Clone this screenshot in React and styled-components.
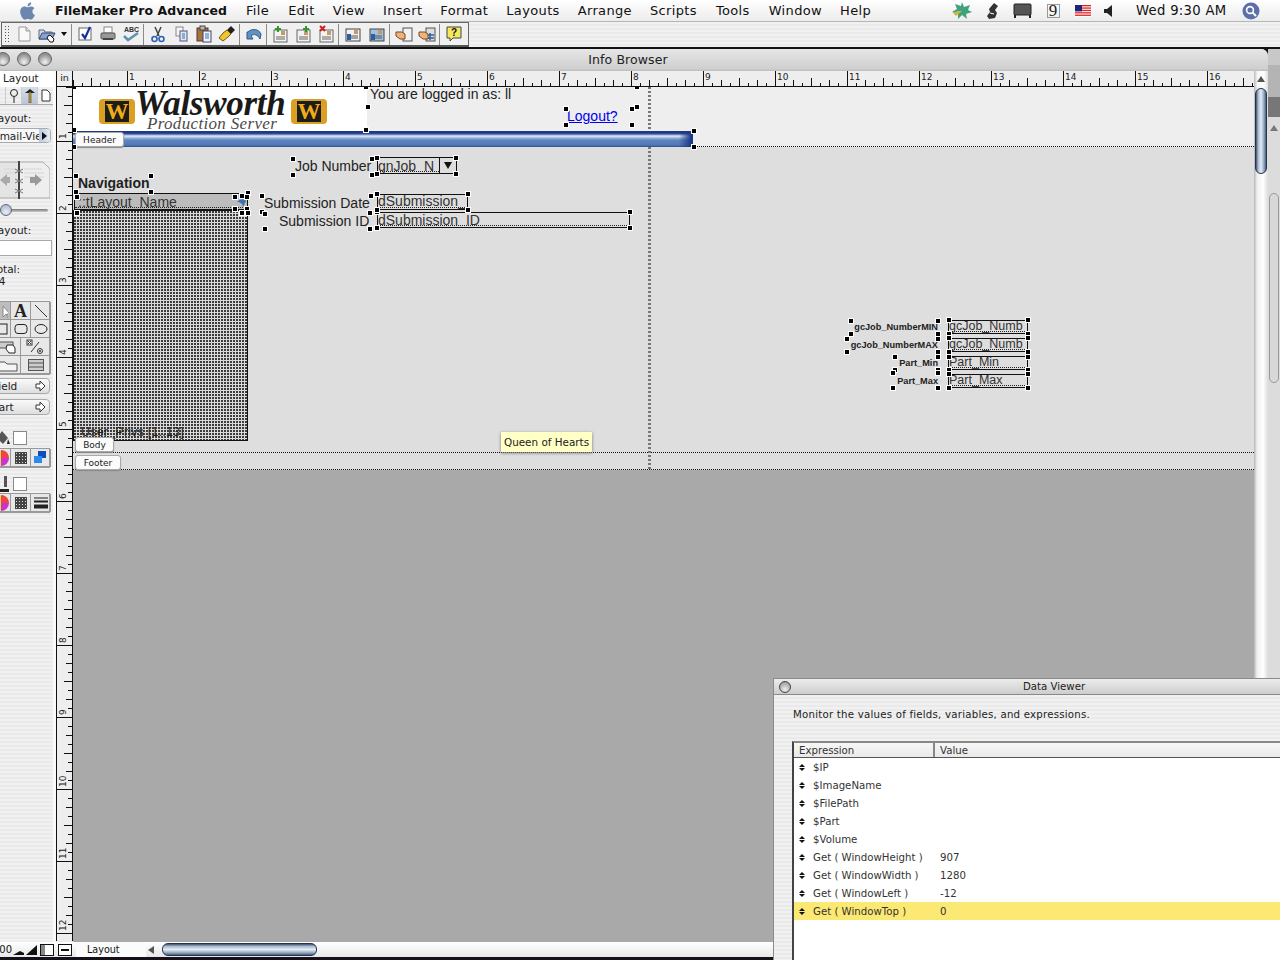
import React from 'react';
import styled, { createGlobalStyle } from 'styled-components';
import { FaApple } from 'react-icons/fa';

const UI = `"DejaVu Sans", "Liberation Sans", sans-serif`;
const SANS = `"Liberation Sans", Arial, sans-serif`;
const SERIF = `"Liberation Serif", "Times New Roman", serif`;
const STRIPES = `repeating-linear-gradient(180deg, #f1f1f1 0 2px, #eaeaea 2px 4px)`;

const GlobalStyle = createGlobalStyle`
  html, body { margin: 0; padding: 0; background: #15101a; }
  * { box-sizing: border-box; }
`;

const Screen = styled.div`
  position: relative;
  width: 1280px;
  height: 960px;
  overflow: hidden;
  display: flex;
  flex-direction: column;
  font-family: ${UI};
  color: #111;
  background: #15101a;
`;

/* menu bar */
const MenuBar = styled.div`
  height: 22px;
  flex: none;
  display: flex;
  align-items: center;
  background: linear-gradient(180deg, #fff 0%, #f6f6f6 45%, #ececec 100%);
  border-bottom: 1px solid #b5b5b5;
  font-size: 13px;
  padding-left: 18px;
`;
const AppleMark = styled(FaApple)`
  width: 19px;
  height: 20px;
  color: #6d86b1;
  margin-right: 18px;
`;
const AppName = styled.span`
  font-weight: 700;
  font-size: 12.45px;
  margin-right: 19px;
  letter-spacing: 0.1px;
  white-space: nowrap;
`;
const MenuItem = styled.span`
  margin-right: ${(p) => p.$gap}px;
  white-space: nowrap;
  font-size: 13px;
  letter-spacing: 0.35px;
`;
const MenuRight = styled.div`
  margin-left: auto;
  display: flex;
  align-items: center;
  height: 100%;
  padding-right: 20px;
`;
const Extra = styled.span`
  display: flex;
  align-items: center;
  justify-content: center;
  width: ${(p) => p.$w}px;
`;
const Clock = styled.span`
  font-size: 13.2px;
  letter-spacing: 0.3px;
  width: 106px;
  white-space: nowrap;
`;

/* toolbar */
const ToolRow = styled.div`
  height: 27px;
  flex: none;
  background: ${STRIPES};
  border-bottom: 2px solid #111;
`;
const Toolbar = styled.div`
  width: 468px;
  height: 25px;
  display: flex;
  align-items: center;
  margin-left: 1px;
  border: 1px solid #666;
  border-bottom-width: 2px;
  border-bottom-color: #555;
  background: #f0f0f0;
`;
const Grip = styled.span`
  width: 6px;
  height: 19px;
  margin: 0 2px 0 2px;
  background: radial-gradient(circle, #555 0.7px, transparent 0.9px) 0 0/3px 3px;
`;
const ToolButton = styled.span`
  width: 23px;
  height: 20px;
  display: flex;
  align-items: center;
  justify-content: center;
  margin-left: ${(p) => p.$ml || 0}px;
`;
const ToolArrow = styled.span`
  width: 12px;
  display: flex;
  justify-content: center;
  &::after {
    content: '';
    border: 3px solid transparent;
    border-top: 4px solid #111;
    border-bottom: 0;
  }
`;
const ToolSep = styled.span`
  width: 1px;
  height: 21px;
  margin: 0 ${(p) => 1 + (p.$extra || 0)}px 0 1px;
  background: #8b8b8b;
`;

/* document window */
const Desk = styled.div`
  flex: 1;
  min-height: 0;
  display: flex;
`;
const Win = styled.div`
  width: 1268px;
  height: 908px;
  display: flex;
  flex-direction: column;
  background: #eee;
  border-top-right-radius: 7px;
  overflow: hidden;
`;
const TitleBar = styled.div`
  position: relative;
  height: 22px;
  flex: none;
  display: flex;
  align-items: center;
  justify-content: center;
  padding: 0 12px 2px 0;
  background: linear-gradient(180deg, #e6e6e6, #cfcfcf 90%, #bbb);
  font-size: 12.5px;
  letter-spacing: 0.1px;
  color: #222;
`;
const Lights = styled.div`
  position: absolute;
  left: -4px;
  top: 3px;
  display: flex;
  gap: 7px;
`;
const Light = styled.span`
  width: 14px;
  height: 14px;
  border-radius: 50%;
  border: 1px solid #666;
  background: radial-gradient(circle at 50% 75%, #f4f4f4, #a4a4a4 55%, #777 100%);
`;
const WinBody = styled.div`
  flex: 1;
  min-height: 0;
  display: flex;
`;

/* status palette */
const Sidebar = styled.div`
  width: 56px;
  flex: none;
  overflow: hidden;
  background: ${STRIPES};
  border-right: 3px solid #fafafa;
  font-size: 10.5px;
  color: #222;
`;
const SideTitle = styled.div`
  height: 16px;
  line-height: 15px;
  padding-left: 3px;
  background: #fff;
  font-size: 10.5px;
`;
const SideInner = styled.div`
  margin-left: -12px;
  width: 65px;
  display: flex;
  flex-direction: column;
`;
const ModeRow = styled.div`
  height: 18px;
  display: flex;
  padding-left: 17px;
  border-bottom: 1px solid #aaa;
`;
const ModeCell = styled.span`
  width: 16px;
  display: flex;
  align-items: center;
  justify-content: center;
  border-left: 1px solid #ccc;
  background: ${(p) => (p.$on ? 'linear-gradient(180deg,#d5dde8,#b9c6d8)' : 'transparent')};
`;
const SideLabel = styled.div`
  margin-top: ${(p) => p.$top}px;
  padding-left: 4px;
  height: 12px;
  line-height: 12px;
  white-space: nowrap;
`;
const Popup = styled.div`
  margin-top: 4px;
  height: 15px;
  width: 63px;
  display: flex;
  align-items: center;
  padding-left: 4px;
  border: 1px solid #aaa;
  border-radius: 4px;
  background: #f8f8f8;
  overflow: hidden;
  white-space: nowrap;
  span {
    flex: 1;
    overflow: hidden;
  }
  i {
    width: 11px;
    height: 100%;
    flex: none;
    display: flex;
    align-items: center;
    justify-content: center;
    background: linear-gradient(90deg, #b7c8e0, #e5edf7);
  }
  i::after {
    content: '';
    border: 4px solid transparent;
    border-left: 5px solid #111;
    border-right: 0;
  }
`;
const Book = styled.svg`
  display: block;
  margin-top: 18px;
  width: 62px;
  height: 38px;
`;
const SliderTrack = styled.div`
  position: relative;
  margin: 10px 0 0 12px;
  width: 48px;
  height: 3px;
  background: linear-gradient(180deg, #777, #ccc);
  border-radius: 2px;
`;
const SliderKnob = styled.span`
  position: absolute;
  left: 0;
  top: -5px;
  width: 12px;
  height: 12px;
  border-radius: 50%;
  border: 1px solid #667;
  background: radial-gradient(circle at 50% 70%, #e7edf5, #9fb0c6);
`;
const SideInput = styled.div`
  margin-top: 4px;
  width: 64px;
  height: 16px;
  background: #fff;
  border: 1px solid #aaa;
`;
const ToolGrid = styled.div`
  margin: ${(p) => p.$top}px 0 0 2px;
  width: 60px;
  display: grid;
  grid-template-columns: repeat(6, 10px);
  grid-auto-rows: 18px;
  border: 1px solid #999;
  background: #e8e8e8;
`;
const ToolCell = styled.span`
  grid-column: span ${(p) => p.$span};
  display: flex;
  align-items: center;
  justify-content: center;
  overflow: hidden;
  border-right: 1px solid #999;
  border-bottom: 1px solid #999;
  background: ${(p) => (p.$on ? '#bdbdbd' : 'transparent')};
`;
const LetterA = styled.span`
  font-family: ${SERIF};
  font-weight: 700;
  font-size: 18px;
  line-height: 18px;
  color: #222;
`;
const PartButton = styled.div`
  margin: ${(p) => p.$top}px 0 0 0;
  width: 62px;
  height: 16px;
  display: flex;
  align-items: center;
  justify-content: space-between;
  padding: 0 3px 0 4px;
  border: 1px solid #aaa;
  border-radius: 4px;
  background: linear-gradient(180deg, #fafafa, #dedede);
  font-size: 10.5px;
`;
const ColorRow = styled.div`
  margin-top: ${(p) => p.$top}px;
  padding-left: 7px;
  height: 15px;
  display: flex;
  align-items: center;
  gap: 2px;
`;
const Swatch = styled.span`
  width: 14px;
  height: 14px;
  background: #fff;
  border: 1px solid #888;
`;

/* rulers and canvas */
const Main = styled.div`
  flex: 1;
  min-width: 0;
  display: grid;
  grid-template-columns: 17px 1fr 14px;
  grid-template-rows: 16px 1fr;
`;
const Corner = styled.div`
  border-left: 1px solid #111;
  border-right: 1px solid #111;
  border-bottom: 1px solid #111;
  background: #eee;
  font-size: 9.5px;
  line-height: 14px;
  text-align: center;
  color: #222;
`;
const RulerH = styled.svg`
  display: block;
  width: 1181px;
  height: 16px;
  background: #eee;
`;
const RulerV = styled.svg`
  display: block;
  width: 17px;
  height: 854px;
  background: #eee;
  border-left: 1px solid #111;
`;
const RulerText = styled.text`
  font-family: ${UI};
  font-size: 9px;
  fill: #222;
`;
const ScrollArrowCell = styled.div`
  display: flex;
  align-items: center;
  justify-content: center;
  background: linear-gradient(90deg, #bbb, #f7f7f7 25%, #fff 70%, #ddd);
  &::after {
    content: '';
    border: 4px solid transparent;
    border-bottom: 6px solid #555;
    border-top: 0;
  }
`;
const ScrollTrack = styled.div`
  padding: 1px 1px 0;
  background: linear-gradient(90deg, #b5b5b5, #efefef 22%, #fff 65%, #dcdcdc);
`;
const ScrollThumb = styled.div`
  height: 86px;
  border-radius: 6px;
  border: 1px solid #24334a;
  background: linear-gradient(90deg, #3f5069, #a9bbd1 22%, #e6edf5 50%, #8fa6c2 80%, #4a5c76);
`;

const Canvas = styled.div`
  position: relative;
  overflow: hidden;
  display: flex;
  flex-direction: column;
  background: #a9a9a9;
`;
const Part = styled.div`
  flex: none;
  height: ${(p) => p.$h}px;
  background: ${(p) => p.$bg};
  border-bottom: 1px dotted #111;
`;

/* layout objects sit on a free canvas, page coordinates minus its origin */
const placed = (p) => `left: ${p.$x - 73}px; top: ${p.$y - 87}px;`;

const LogoBox = styled.div`
  position: absolute;
  ${placed}
  width: 294px;
  height: 44px;
  display: flex;
  align-items: flex-end;
  padding: 0 0 7px 26px;
  background: #fff;
`;
const Badge = styled.span`
  width: 36px;
  height: 25px;
  flex: none;
  display: flex;
  align-items: center;
  justify-content: center;
  border-radius: 4px;
  border: solid #d9a024;
  border-width: 2px 6px;
  background: #1e1c16;
  overflow: hidden;
  font-family: ${SERIF};
  font-weight: 700;
  font-size: 23px;
  line-height: 20px;
  color: #f0ac18;
`;
const LogoText = styled.div`
  width: 156px;
  height: 37px;
  flex: none;
  font-family: ${SERIF};
  font-style: italic;
  white-space: nowrap;
`;
const LogoName = styled.div`
  font-weight: 700;
  font-size: 35px;
  line-height: 30px;
  padding-top: 2px;
  color: #1a1a18;
  letter-spacing: -0.3px;
`;
const LogoSub = styled.div`
  font-size: 17px;
  line-height: 16px;
  margin: -3px 0 0 12px;
  color: #4c4c4c;
  letter-spacing: 0.33px;
`;
const HeaderBar = styled.div`
  position: absolute;
  ${placed}
  width: 620px;
  height: 16px;
  border-radius: 0 3px 3px 0;
  background: linear-gradient(180deg, #1e3a86 0 2px, #3e5fa6 3px, #e7ecf5 5px, #9cb4d8 7px, #5f85c0 9px, #4f78b8 14px, #2f4e8e 16px);
  &::after {
    content: '';
    position: absolute;
    right: 0;
    top: 0;
    width: 14px;
    height: 100%;
    border-radius: 0 3px 3px 0;
    background: linear-gradient(90deg, transparent, #1e3a86 85%);
  }
`;
const Caption = styled.div`
  position: absolute;
  ${placed}
  font-family: ${SANS};
  font-size: ${(p) => p.$size || 14}px;
  font-weight: ${(p) => (p.$bold ? 700 : 400)};
  line-height: 16px;
  color: #222;
  white-space: nowrap;
`;
const LogoutLink = styled(Caption)`
  color: #0000ee;
  text-decoration: underline;
`;
const MiniLabel = styled.div`
  position: absolute;
  right: ${1254 - 938}px;
  top: ${(p) => p.$y - 87}px;
  font-family: ${SANS};
  font-weight: 700;
  font-size: 9.2px;
  line-height: 12px;
  color: #222;
  white-space: nowrap;
`;
const Field = styled.div`
  position: absolute;
  ${placed}
  width: ${(p) => p.$w}px;
  height: ${(p) => p.$h}px;
  border: 1px solid #111;
  background: ${(p) => p.$bg || 'transparent'};
  display: flex;
  overflow: hidden;
  font-family: ${SANS};
  font-size: ${(p) => p.$size || 14}px;
  color: #333;
`;
const FieldText = styled.span`
  flex: 1;
  min-width: 0;
  height: calc(100% - 1px);
  padding-left: ${(p) => p.$pad ?? 0}px;
  line-height: ${(p) => p.$lh || 14}px;
  border-bottom: 1px dotted #222;
  white-space: nowrap;
`;
const Drop = styled.span`
  width: 17px;
  flex: none;
  border-left: 1px solid #111;
  background: #dedede;
  display: flex;
  align-items: center;
  justify-content: center;
  &::after {
    content: '';
    border: 4px solid transparent;
    border-top: 7px solid #111;
    border-bottom: 0;
  }
`;
const Portal = styled.div`
  position: absolute;
  ${placed}
  width: 175px;
  height: 231px;
  border: 1px solid #111;
  background: conic-gradient(at 2px 2px, #dadada 75%, #3c3c3c 0) 0 0/3px 3px;
`;
const PortalText = styled(Caption)`
  font-size: 12.5px;
  color: #222;
  letter-spacing: 0.2px;
`;
const GoIcon = styled.svg`
  position: absolute;
  ${placed}
  width: 11px;
  height: 10px;
`;
const PageBreak = styled.div`
  position: absolute;
  left: ${648 - 73}px;
  top: 0;
  width: 3px;
  height: 383px;
  background: repeating-linear-gradient(180deg, #777 0 2px, transparent 2px 4px);
`;
const PartTab = styled.div`
  position: absolute;
  ${placed}
  width: ${(p) => p.$w}px;
  height: 15px;
  display: flex;
  align-items: center;
  justify-content: center;
  border: 1px solid #aaa;
  border-radius: 3px;
  background: #fbfbfb;
  box-shadow: 0 1px 1px #888;
  font-family: ${UI};
  font-size: 9px;
  color: #222;
`;
const Handle = styled.span`
  position: absolute;
  left: ${(p) => p.$x - 73 - 2}px;
  top: ${(p) => p.$y - 87 - 2}px;
  width: 4px;
  height: 4px;
  background: #000;
  box-shadow: 0 0 0 1px #fff;
`;
const Tooltip = styled.div`
  position: absolute;
  ${placed}
  width: 91px;
  height: 20px;
  display: flex;
  align-items: center;
  justify-content: center;
  background: #ffffc6;
  box-shadow: 0 1px 3px #777;
  font-size: 10.4px;
  color: #222;
  white-space: nowrap;
`;

/* bottom status strip */
const StatusBar = styled.div`
  height: 15px;
  flex: none;
  display: flex;
  align-items: center;
  background: linear-gradient(180deg, #fff, #e8e8e8);
  font-size: 10px;
  overflow: hidden;
`;
const Zoom = styled.span`
  width: 12px;
  display: flex;
  justify-content: flex-end;
  overflow: hidden;
`;
const StatusSlot = styled.span`
  display: flex;
  margin-left: ${(p) => p.$ml}px;
`;
const ModeName = styled.span`
  width: 70px;
  margin-left: 4px;
  height: 100%;
  line-height: 15px;
  padding-left: 11px;
  background: #fbfbfb;
  font-size: 9.6px;
`;
const HArrow = styled.span`
  margin: 0 8px 0 2px;
  border: 4px solid transparent;
  border-right: 6px solid #555;
  border-left: 0;
`;
const HThumb = styled.span`
  width: 155px;
  height: 13px;
  border-radius: 6px;
  border: 1px solid #24334a;
  background: linear-gradient(180deg, #3f5069, #a9bbd1 22%, #e6edf5 50%, #8fa6c2 80%, #4a5c76);
`;

/* window behind, right edge */
const Behind = styled.div`
  width: 12px;
  flex: none;
  height: 908px;
  display: flex;
  flex-direction: column;
  background: #dcdcdc;
`;
const BehindBand = styled.div`
  height: ${(p) => p.$h}px;
  flex: none;
  background: ${(p) => p.$bg};
`;
const BehindArrow = styled.div`
  height: 15px;
  margin-top: 3px;
  display: flex;
  justify-content: center;
  align-items: center;
  &::after {
    content: '';
    border: 4px solid transparent;
    border-bottom: 6px solid #777;
    border-top: 0;
  }
`;
const BehindThumb = styled.div`
  margin: 58px 1px 0;
  height: 190px;
  border: 1px solid #999;
  border-radius: 5px;
  background: #d8d8d8;
`;

/* data viewer palette */
const Viewer = styled.div`
  position: absolute;
  left: 773px;
  top: 678px;
  width: 562px;
  height: 290px;
  display: flex;
  flex-direction: column;
  border: 1px solid #8a8a8a;
  background: ${STRIPES};
`;
const ViewerTitle = styled.div`
  position: relative;
  height: 16px;
  flex: none;
  display: flex;
  align-items: center;
  justify-content: center;
  background: linear-gradient(180deg, #ececec, #cdcdcd);
  border-bottom: 1px solid #888;
  font-size: 10.2px;
  color: #222;
`;
const ViewerClose = styled.span`
  position: absolute;
  left: 5px;
  top: 2px;
  width: 12px;
  height: 12px;
  border-radius: 50%;
  border: 1px solid #444;
  background: radial-gradient(circle at 50% 75%, #eee, #8b8b8b);
`;
const ViewerNote = styled.div`
  margin: 12px 0 0 19px;
  height: 15px;
  font-size: 10.2px;
  letter-spacing: 0.23px;
  line-height: 15px;
  color: #222;
`;
const Table = styled.div`
  margin: 19px 0 0 18px;
  flex: 1;
  border-left: 2px solid #444;
  border-top: 2px solid #888;
  background: #fff;
  font-size: 10.2px;
  color: #333;
`;
const TableHead = styled.div`
  height: 15px;
  display: flex;
  border-bottom: 1px solid #555;
  background: linear-gradient(180deg, #f7f7f7, #e9e9e9);
  span {
    line-height: 16px;
    padding-left: 5px;
  }
  span:first-child {
    width: 141px;
    border-right: 2px solid #888;
  }
`;
const Row = styled.div`
  height: 18px;
  display: flex;
  align-items: center;
  background: ${(p) => (p.$hot ? '#fbe973' : 'transparent')};
`;
const Sort = styled.span`
  width: 19px;
  padding-left: 5px;
  display: flex;
  flex-direction: column;
  gap: 1px;
  &::before,
  &::after {
    content: '';
    width: 0;
    border: 3px solid transparent;
  }
  &::before {
    border-bottom: 3px solid #111;
    border-top: 0;
  }
  &::after {
    border-top: 3px solid #111;
    border-bottom: 0;
  }
`;
const Expr = styled.span`
  width: 127px;
  white-space: nowrap;
`;

/* small drawings */
const Ico = ({ children, w = 18, h = 18 }) => (
  <svg width={w} height={h} viewBox={`0 0 ${w} ${h}`}>{children}</svg>
);
const Doc = () => (
  <Ico><path d="M4 2h7l4 4v10H4z" fill="#fafafa" stroke="#999" /><path d="M11 2v4h4" fill="#ddd" stroke="#999" /></Ico>
);
const OpenDoc = () => (
  <Ico><path d="M1 5h5l1 2h7v7H1z" fill="#cfdcec" stroke="#667" /><path d="M1 14l3-6h13l-3 6z" fill="#7fa6d6" stroke="#446" /><path d="M10 11l2-1 4 4-1 3h-3l-3-4z" fill="#fff" stroke="#111" /></Ico>
);
const Check = () => (
  <Ico><rect x="3" y="3" width="12" height="12" fill="#fff" stroke="#666" /><path d="M6 9l3 4 5-11" fill="none" stroke="#1c2f9e" strokeWidth="2.2" /></Ico>
);
const Printer = () => (
  <Ico><rect x="5" y="2" width="8" height="6" fill="#fff" stroke="#888" /><rect x="2" y="8" width="14" height="6" rx="1" fill="#999" stroke="#555" /><rect x="4" y="13" width="10" height="2" fill="#444" /></Ico>
);
const Spell = () => (
  <Ico><text x="2" y="7" fontFamily={SANS} fontSize="7" fontWeight="700" fill="#333">ABC</text><path d="M2 11l4 4 10-7" fill="none" stroke="#5f93b0" strokeWidth="2.5" /></Ico>
);
const Scissors = () => (
  <Ico><path d="M6 2l4 9M12 2L8 11" stroke="#444" strokeWidth="1.5" /><circle cx="5.5" cy="14" r="2.5" fill="none" stroke="#2d62b5" strokeWidth="1.6" /><circle cx="12.5" cy="14" r="2.5" fill="none" stroke="#2d62b5" strokeWidth="1.6" /></Ico>
);
const Copy = () => (
  <Ico><rect x="4" y="2" width="7" height="9" fill="#f4f4f4" stroke="#888" /><rect x="8" y="6" width="7" height="10" fill="#dce8f6" stroke="#557" /><path d="M10 9h3M10 11h3M10 13h3" stroke="#3a6fb5" /></Ico>
);
const Paste = () => (
  <Ico><rect x="2" y="3" width="11" height="13" fill="#a9713b" stroke="#533" /><rect x="5" y="1" width="5" height="4" fill="#bbb" stroke="#444" /><rect x="8" y="6" width="8" height="11" fill="#eef4fb" stroke="#446" /><path d="M10 9h4M10 11h4M10 13h4" stroke="#3a6fb5" /></Ico>
);
const Brush = () => (
  <Ico><path d="M13 1l4 4-4 4-4-4z" fill="#222" /><path d="M9 5l4 4-3 3-5 4-4-3 4-5z" fill="#f0c52e" stroke="#735b0a" /></Ico>
);
const Undo = () => (
  <Ico><path d="M3 7c4-4 11-3 13 2l-1 5c-2-4-6-6-9-3l2 3H2V7z" fill="#5f93c4" stroke="#2d5a8a" /></Ico>
);
const RecordIco = ({ mark, color }) => (
  <Ico>
    <rect x="3" y="5" width="13" height="12" fill="#f2f2f2" stroke="#666" />
    <rect x="10" y="6" width="4" height="4" fill="#c79a63" />
    <path d="M5 12h9M5 14h9" stroke="#666" />
    {mark && <path d={mark} stroke={color} strokeWidth="2" fill="none" />}
  </Ico>
);
const SaveRecord = ({ blue }) => (
  <Ico>
    <rect x="2" y="4" width="14" height="12" fill={blue ? '#9fc0de' : '#f2f2f2'} stroke="#444" />
    <rect x="10" y="5" width="4" height="4" fill="#c79a63" />
    <path d="M4 11h10M4 13h10" stroke="#555" />
    <path d="M3 9h4v6H3z" fill="#2b5fa5" />
  </Ico>
);
const HandRecord = ({ grid }) => (
  <Ico>
    <rect x="8" y="3" width="9" height="13" fill={grid ? '#ddd' : '#f2f2f2'} stroke="#555" />
    {grid && <path d="M9 10h7M9 13h7M12 8v7" stroke="#2b5fa5" strokeWidth="1.5" />}
    <path d="M1 7h6l3 2v5H5L1 11z" fill="#eeb27d" stroke="#7a4a20" />
  </Ico>
);
const Help = () => (
  <Ico><path d="M2 2h14v11H8l-3 3v-3H2z" fill="#f4e860" stroke="#444" /><text x="9" y="11" textAnchor="middle" fontFamily={SANS} fontWeight="700" fontSize="10" fill="#111">?</text></Ico>
);
const Leaf = () => (
  <Ico w={22} h={20}>
    <path d="M11 1l2 5 6-2-2 5 4 2-6 2 1 5-5-4-4 4v-5l-6-2 5-3-2-5 6 2z" fill="#3fa27f" />
    <path d="M11 10L5 15l-3-3 5-2z" fill="#d6b53d" />
  </Ico>
);
const ScriptIco = () => (
  <Ico w={14} h={18}><path d="M8 1l4 3-3 4 2 3-2 5-6 1-2-3 3-4-1-3z" fill="#333" /><path d="M4 11l4 1" stroke="#fff" /></Ico>
);
const Monitor = () => (
  <Ico w={20} h={16}><rect x="1" y="1" width="17" height="11" rx="1" fill="#555" stroke="#222" /><rect x="1" y="12" width="2" height="3" fill="#222" /><rect x="16" y="12" width="2" height="3" fill="#222" /></Ico>
);
const Nine = styled.span`
  width: 13px;
  height: 14px;
  display: flex;
  align-items: center;
  justify-content: center;
  border: 1px solid #999;
  font-family: ${SERIF};
  font-size: 17px;
  color: #222;
`;
const Flag = () => (
  <Ico w={16} h={12}>
    <rect width="16" height="12" fill="#fff" />
    {[0, 2.4, 4.8, 7.2, 9.6].map((y) => <rect key={y} y={y} width="16" height="1.3" fill="#d22" />)}
    <rect width="7" height="6.4" fill="#227" />
  </Ico>
);
const Speaker = () => (
  <Ico w={9} h={12}><path d="M0 4h3l5-4v12L3 8H0z" fill="#222" /></Ico>
);
const Spotlight = () => (
  <Ico w={18} h={18}>
    <circle cx="9" cy="9" r="8.5" fill="#5a70a8" />
    <circle cx="8" cy="8" r="3.4" fill="none" stroke="#fff" strokeWidth="1.6" />
    <path d="M10.5 10.5l3.5 3.5" stroke="#fff" strokeWidth="2" />
  </Ico>
);
const Wheel = () => (
  <svg width="16" height="16" viewBox="0 0 16 16">
    <circle cx="8" cy="8" r="7.5" fill="#e8d84a" />
    <path d="M8 8V0a8 8 0 0 1 8 8z" fill="#e44" />
    <path d="M8 8h8a8 8 0 0 1-8 8z" fill="#c3c" />
  </svg>
);
const Dots = () => (
  <svg width="12" height="12" viewBox="0 0 12 12">
    <rect width="12" height="12" fill="#444" />
    {[1, 4, 7, 10].flatMap((x) => [1, 4, 7, 10].map((y) => <rect key={`${x}-${y}`} x={x} y={y} width="1" height="1" fill="#ddd" />))}
  </svg>
);
const Effect = () => (
  <svg width="16" height="14" viewBox="0 0 16 14"><rect x="5" y="0" width="8" height="7" fill="#0d4fb8" /><rect x="1" y="5" width="8" height="7" fill="#2a8af0" /></svg>
);
const LineWidths = () => (
  <svg width="14" height="12" viewBox="0 0 14 12"><path d="M0 1h14" stroke="#222" /><path d="M0 4.5h14" stroke="#222" strokeWidth="2" /><path d="M0 9.5h14" stroke="#222" strokeWidth="4" /></svg>
);
const ArrowRight = () => (
  <svg width="11" height="10" viewBox="0 0 11 10"><path d="M1 3h4V0l5 5-5 5V7H1z" fill="#fff" stroke="#333" /></svg>
);
const Bucket = () => (
  <svg width="16" height="16" viewBox="0 0 16 16"><path d="M7 1l6 7-5 6-6-6z" fill="#555" /><path d="M13 9l2 5h-3z" fill="#222" /></svg>
);
const Pen = () => (
  <svg width="16" height="18" viewBox="0 0 16 18"><path d="M9 1h3v11H9z" fill="#555" /><path d="M3 14h11v3H3z" fill="#222" /></svg>
);
const MiniBars = ({ big }) => (
  <svg width="12" height="12" viewBox="0 0 12 12"><path d={big ? 'M0 11L11 1v10z' : 'M0 11l7-4 4 2v2z'} fill="#111" /></svg>
);
const PaneIco = ({ alt }) => (
  <svg width="14" height="12" viewBox="0 0 14 12">
    <rect x=".5" y=".5" width="13" height="11" fill="#fff" stroke="#111" />
    {alt ? <path d="M3 5h8v2H3z" fill="#111" /> : <path d="M1 1h4v10H1z" fill="#888" />}
  </svg>
);

const RULER_NUMS = Array.from({ length: 18 }, (_, i) => i);

function HRuler() {
  const ticks = [];
  for (let i = -1; i < 140; i++) {
    const x = i * 9 - 18 + 0.5;
    const m = ((i % 8) + 8) % 8;
    const len = m === 0 ? 16 : m === 4 ? 9 : m % 2 === 0 ? 7 : 4;
    ticks.push(<path key={i} d={`M${x} 16v-${len}`} stroke="#111" />);
  }
  return (
    <RulerH viewBox="0 0 1181 16">
      {ticks}
      <path d="M0 15.5h1181" stroke="#111" />
      {RULER_NUMS.slice(1).map((n) => (
        <RulerText key={n} x={n * 72 - 18 + 2} y="9">{n}</RulerText>
      ))}
    </RulerH>
  );
}

function VRuler() {
  const ticks = [];
  for (let i = -2; i < 100; i++) {
    const y = i * 9 - 18 + 0.5;
    const m = ((i % 8) + 8) % 8;
    const len = m === 0 ? 16 : m === 4 ? 9 : m % 2 === 0 ? 7 : 5;
    ticks.push(<path key={i} d={`M16 ${y}h-${len}`} stroke="#111" />);
  }
  return (
    <RulerV viewBox="0 0 16 854">
      {ticks}
      <path d="M15.5 0v854" stroke="#111" />
      {RULER_NUMS.slice(1, 13).map((n) => (
        <RulerText key={n} transform={`translate(9 ${n * 72 - 18 - 2}) rotate(-90)`}>{n}</RulerText>
      ))}
    </RulerV>
  );
}

const MENUS = [
  ['File', 19], ['Edit', 18], ['View', 18], ['Insert', 18], ['Format', 18],
  ['Layouts', 18], ['Arrange', 18], ['Scripts', 19], ['Tools', 19], ['Window', 18], ['Help', 0],
];

const HANDLES = [
  [74, 87], [366, 87], [368, 107], [366, 130], [74, 130], [74, 147], [637, 87], [637, 107],
  [566, 109], [632, 109], [566, 125], [632, 125], [694, 131], [694, 147],
  [293, 159], [293, 175], [372, 159], [372, 175], [377, 158], [377, 174], [456, 158], [456, 174],
  [76, 176], [151, 176], [76, 192], [151, 192], [77, 197], [77, 213], [235, 197], [235, 209],
  [242, 196], [242, 213], [248, 193], [247, 197], [247, 209], [248, 213],
  [262, 196], [262, 212], [371, 196], [370, 213], [265, 214], [265, 229], [370, 229],
  [377, 194], [468, 194], [468, 210], [377, 212], [630, 212], [630, 228], [377, 228], [377, 210],
  [851, 321], [938, 321], [851, 334], [938, 334], [847, 339], [938, 339], [847, 352], [938, 352],
  [895, 357], [938, 357], [895, 370], [938, 370], [893, 373], [938, 373], [893, 388], [938, 388],
  [949, 320], [1028, 320], [949, 334], [1028, 334], [949, 338], [1028, 338], [949, 352], [1028, 352],
  [949, 357], [1028, 357], [949, 370], [1028, 370], [949, 374], [1028, 374], [949, 388], [1028, 388],
];

const MINI_FIELDS = [
  { label: 'gcJob_NumberMIN', value: 'gcJob_Numb', y: 320 },
  { label: 'gcJob_NumberMAX', value: 'gcJob_Numb', y: 338 },
  { label: 'Part_Min', value: 'Part_Min', y: 356 },
  { label: 'Part_Max', value: 'Part_Max', y: 374 },
];

const ROWS = [
  ['$IP', ''], ['$ImageName', ''], ['$FilePath', ''], ['$Part', ''], ['$Volume', ''],
  ['Get ( WindowHeight )', '907'], ['Get ( WindowWidth )', '1280'],
  ['Get ( WindowLeft )', '-12'], ['Get ( WindowTop )', '0', true],
];

export default function App() {
  return (
    <>
      <GlobalStyle />
      <Screen>
        <MenuBar>
          <AppleMark />
          <AppName>FileMaker Pro Advanced</AppName>
          {MENUS.map(([name, gap]) => (
            <MenuItem key={name} $gap={gap}>{name}</MenuItem>
          ))}
          <MenuRight>
            <Extra $w={32}><Leaf /></Extra>
            <Extra $w={30}><ScriptIco /></Extra>
            <Extra $w={30}><Monitor /></Extra>
            <Extra $w={30}><Nine>9</Nine></Extra>
            <Extra $w={30}><Flag /></Extra>
            <Extra $w={20}><Speaker /></Extra>
            <Extra $w={18} />
            <Clock>Wed 9:30 AM</Clock>
            <Extra $w={18}><Spotlight /></Extra>
          </MenuRight>
        </MenuBar>

        <ToolRow>
          <Toolbar>
            <Grip />
            <ToolButton><Doc /></ToolButton>
            <ToolButton><OpenDoc /></ToolButton>
            <ToolArrow />
            <ToolSep />
            <ToolButton><Check /></ToolButton>
            <ToolButton><Printer /></ToolButton>
            <ToolButton><Spell /></ToolButton>
            <ToolSep $extra={1} />
            <ToolButton><Scissors /></ToolButton>
            <ToolButton><Copy /></ToolButton>
            <ToolButton><Paste /></ToolButton>
            <ToolButton><Brush /></ToolButton>
            <ToolSep $extra={1} />
            <ToolButton><Undo /></ToolButton>
            <ToolSep />
            <ToolButton><RecordIco mark="M4 4h6M7 1v6" color="#2a9a2a" /></ToolButton>
            <ToolButton><RecordIco mark="M9 4h6M12 1v6" color="#2a9a2a" /></ToolButton>
            <ToolButton><RecordIco mark="M3 1l5 5M8 1L3 6" color="#c22" /></ToolButton>
            <ToolSep $extra={1} />
            <ToolButton><SaveRecord /></ToolButton>
            <ToolButton $ml={1}><SaveRecord blue /></ToolButton>
            <ToolSep $extra={1} />
            <ToolButton><HandRecord /></ToolButton>
            <ToolButton><HandRecord grid /></ToolButton>
            <ToolSep $extra={1} />
            <ToolButton><Help /></ToolButton>
          </Toolbar>
        </ToolRow>

        <Desk>
          <Win>
            <TitleBar>
              <Lights>
                <Light />
                <Light />
                <Light />
              </Lights>
              Info Browser
            </TitleBar>
            <WinBody>
              <Sidebar>
                <SideTitle>Layout</SideTitle>
                <SideInner>
                  <ModeRow>
                    <ModeCell>
                      <svg width="10" height="15" viewBox="0 0 10 15"><circle cx="5" cy="5" r="3.5" fill="none" stroke="#222" /><path d="M5 9v6" stroke="#222" /></svg>
                    </ModeCell>
                    <ModeCell $on>
                      <svg width="12" height="15" viewBox="0 0 12 15"><path d="M1 5l5-4 5 4z" fill="#222" /><path d="M5 4h2v11H5z" fill="#d5a820" stroke="#222" strokeWidth=".5" /></svg>
                    </ModeCell>
                    <ModeCell>
                      <svg width="10" height="13" viewBox="0 0 10 13"><path d="M1 1h5l3 3v8H1z" fill="#fff" stroke="#333" /></svg>
                    </ModeCell>
                  </ModeRow>
                  <SideLabel $top={7}>Layout:</SideLabel>
                  <Popup><span>Email-View</span><i /></Popup>
                  <Book viewBox="0 0 62 38">
                    <path d="M0 1h31v36H0z" fill="#e4e4e4" stroke="#aaa" />
                    <path d="M31 1h24l7 7v29H31z" fill="#eee" stroke="#aaa" />
                    <path d="M36 8h18M36 12h20M36 16h20M16 8h12M16 12h12" stroke="#d6d6d6" />
                    <path d="M31 0v38" stroke="#444" strokeWidth="2" />
                    <path d="M12 19l7-6v3h3v6h-3v3z" fill="#aaa" />
                    <path d="M54 19l-7-6v3h-5v6h5v3z" fill="#999" />
                    <path d="M27 8l8 4M35 8l-8 4M27 18l8 4M35 18l-8 4M27 28l8 4M35 28l-8 4" stroke="#777" />
                  </Book>
                  <SliderTrack><SliderKnob /></SliderTrack>
                  <SideLabel $top={12}>Layout:</SideLabel>
                  <SideInput />
                  <SideLabel $top={7}>Total:</SideLabel>
                  <SideLabel $top={0}>14</SideLabel>

                  <ToolGrid $top={14}>
                    <ToolCell $span={2} $on><svg width="14" height="14" viewBox="0 0 14 14"><path d="M9 2v11l3-3 2 4 1-1-2-3h3z" fill="#fff" stroke="#888" /></svg></ToolCell>
                    <ToolCell $span={2}><LetterA>A</LetterA></ToolCell>
                    <ToolCell $span={2}><svg width="14" height="14" viewBox="0 0 14 14"><path d="M1 1l12 12" stroke="#333" /></svg></ToolCell>
                    <ToolCell $span={2}><svg width="14" height="12" viewBox="0 0 14 12"><rect x="4" y="1" width="9" height="10" fill="none" stroke="#222" /></svg></ToolCell>
                    <ToolCell $span={2}><svg width="14" height="12" viewBox="0 0 14 12"><rect x="1" y="1.5" width="12" height="9" rx="3" fill="none" stroke="#222" /></svg></ToolCell>
                    <ToolCell $span={2}><svg width="14" height="12" viewBox="0 0 14 12"><ellipse cx="7" cy="6" rx="6" ry="4.5" fill="none" stroke="#222" /></svg></ToolCell>
                    <ToolCell $span={3}><svg width="26" height="16" viewBox="0 0 26 16"><rect x="0" y="3" width="20" height="6" fill="#ccc" stroke="#555" /><path d="M14 6h6l2 3v5h-6l-3-4z" fill="#fff" stroke="#222" /></svg></ToolCell>
                    <ToolCell $span={3}><svg width="20" height="16" viewBox="0 0 20 16"><rect x="1" y="1" width="5" height="5" fill="#fff" stroke="#333" /><path d="M2 2l3 3M5 2L2 5M5 13L13 3" stroke="#333" /><circle cx="14" cy="12" r="2.5" fill="none" stroke="#333" /><circle cx="14" cy="12" r="1" fill="#333" /></svg></ToolCell>
                    <ToolCell $span={3}><svg width="26" height="14" viewBox="0 0 26 14"><path d="M2 4h10l2 2h10v7H2z" fill="#f4f4f4" stroke="#555" /></svg></ToolCell>
                    <ToolCell $span={3}><svg width="16" height="12" viewBox="0 0 16 12"><rect x=".5" y=".5" width="15" height="11" fill="#ccc" stroke="#555" /><path d="M0 4h16M0 8h16" stroke="#555" /></svg></ToolCell>
                  </ToolGrid>
                  <PartButton $top={3}>Field<ArrowRight /></PartButton>
                  <PartButton $top={5}>Part<ArrowRight /></PartButton>

                  <ColorRow $top={15}><Bucket /><Swatch /></ColorRow>
                  <ToolGrid $top={3}>
                    <ToolCell $span={2}><Wheel /></ToolCell>
                    <ToolCell $span={2}><Dots /></ToolCell>
                    <ToolCell $span={2}><Effect /></ToolCell>
                  </ToolGrid>
                  <ColorRow $top={8}><Pen /><Swatch /></ColorRow>
                  <ToolGrid $top={2}>
                    <ToolCell $span={2}><Wheel /></ToolCell>
                    <ToolCell $span={2}><Dots /></ToolCell>
                    <ToolCell $span={2}><LineWidths /></ToolCell>
                  </ToolGrid>
                </SideInner>
              </Sidebar>

              <Main>
                <Corner>in</Corner>
                <HRuler />
                <ScrollArrowCell />
                <VRuler />
                <Canvas>
                  <Part $h={60} $bg="#eeeeee" />
                  <Part $h={306} $bg="#dedede" />
                  <Part $h={17} $bg="#dedede" />

                  <PageBreak />
                  <LogoBox $x={73} $y={87}>
                    <Badge>W</Badge>
                    <LogoText>
                      <LogoName>Walsworth</LogoName>
                      <LogoSub>Production Server</LogoSub>
                    </LogoText>
                    <Badge>W</Badge>
                  </LogoBox>
                  <HeaderBar $x={73} $y={131} />
                  <Caption $x={370} $y={86}>You are logged in as: ll</Caption>
                  <LogoutLink $x={567} $y={108}>Logout?</LogoutLink>

                  <Caption $x={295} $y={158}>Job Number</Caption>
                  <Field $x={377} $y={157} $w={80} $h={17}>
                    <FieldText $lh={16}>gnJob_N</FieldText>
                    <Drop />
                  </Field>
                  <Caption $x={78} $y={175} $bold>Navigation</Caption>
                  <Field $x={74} $y={193} $w={174} $h={17} $bg="#bcbcbc">
                    <FieldText $pad={3} $lh={16}>::tLayout_Name</FieldText>
                  </Field>
                  <GoIcon $x={236} $y={198} viewBox="0 0 11 10">
                    <path d="M1 4c2-3 7-4 9-1L7 9C7 6 4 4 1 4z" fill="#3f6fb5" />
                  </GoIcon>
                  <Portal $x={73} $y={210} />
                  <PortalText $x={81} $y={424}>User_Privs [1..13]</PortalText>
                  <Caption $x={264} $y={195}>Submission Date</Caption>
                  <Caption $x={279} $y={213}>Submission ID</Caption>
                  <Field $x={377} $y={194} $w={91} $h={16}>
                    <FieldText $lh={13}>dSubmission_</FieldText>
                  </Field>
                  <Field $x={377} $y={212} $w={253} $h={16}>
                    <FieldText>dSubmission_ID</FieldText>
                  </Field>

                  {MINI_FIELDS.map((f) => (
                    <React.Fragment key={f.y}>
                      <MiniLabel $y={f.y + 1}>{f.label}</MiniLabel>
                      <Field $x={948} $y={f.y} $w={80} $h={14} $size={12.5}>
                        <FieldText $lh={11}>{f.value}</FieldText>
                      </Field>
                    </React.Fragment>
                  ))}

                  <PartTab $x={75} $y={132} $w={49}>Header</PartTab>
                  <PartTab $x={75} $y={437} $w={39}>Body</PartTab>
                  <PartTab $x={75} $y={455} $w={46}>Footer</PartTab>
                  <Tooltip $x={501} $y={432}>Queen of Hearts</Tooltip>

                  {HANDLES.map(([x, y]) => (
                    <Handle key={`${x}-${y}`} $x={x} $y={y} />
                  ))}
                </Canvas>
                <ScrollTrack><ScrollThumb /></ScrollTrack>
              </Main>
            </WinBody>
            <StatusBar>
              <Zoom>100</Zoom>
              <StatusSlot $ml={1}><MiniBars /></StatusSlot>
              <StatusSlot $ml={1}><MiniBars big /></StatusSlot>
              <StatusSlot $ml={2}><PaneIco /></StatusSlot>
              <StatusSlot $ml={4}><PaneIco alt /></StatusSlot>
              <ModeName>Layout</ModeName>
              <HArrow />
              <HThumb />
            </StatusBar>
          </Win>
          <Behind>
            <BehindBand $h={16} $bg="#c8c8c8" />
            <BehindBand $h={32} $bg="#b4b4b4" />
            <BehindBand $h={20} $bg="#777" />
            <BehindArrow />
            <BehindThumb />
          </Behind>
        </Desk>

        <Viewer>
          <ViewerTitle>
            <ViewerClose />
            Data Viewer
          </ViewerTitle>
          <ViewerNote>Monitor the values of fields, variables, and expressions.</ViewerNote>
          <Table>
            <TableHead>
              <span>Expression</span>
              <span>Value</span>
            </TableHead>
            {ROWS.map(([expr, value, hot]) => (
              <Row key={expr} $hot={hot}>
                <Sort />
                <Expr>{expr}</Expr>
                <span>{value}</span>
              </Row>
            ))}
          </Table>
        </Viewer>
      </Screen>
    </>
  );
}
